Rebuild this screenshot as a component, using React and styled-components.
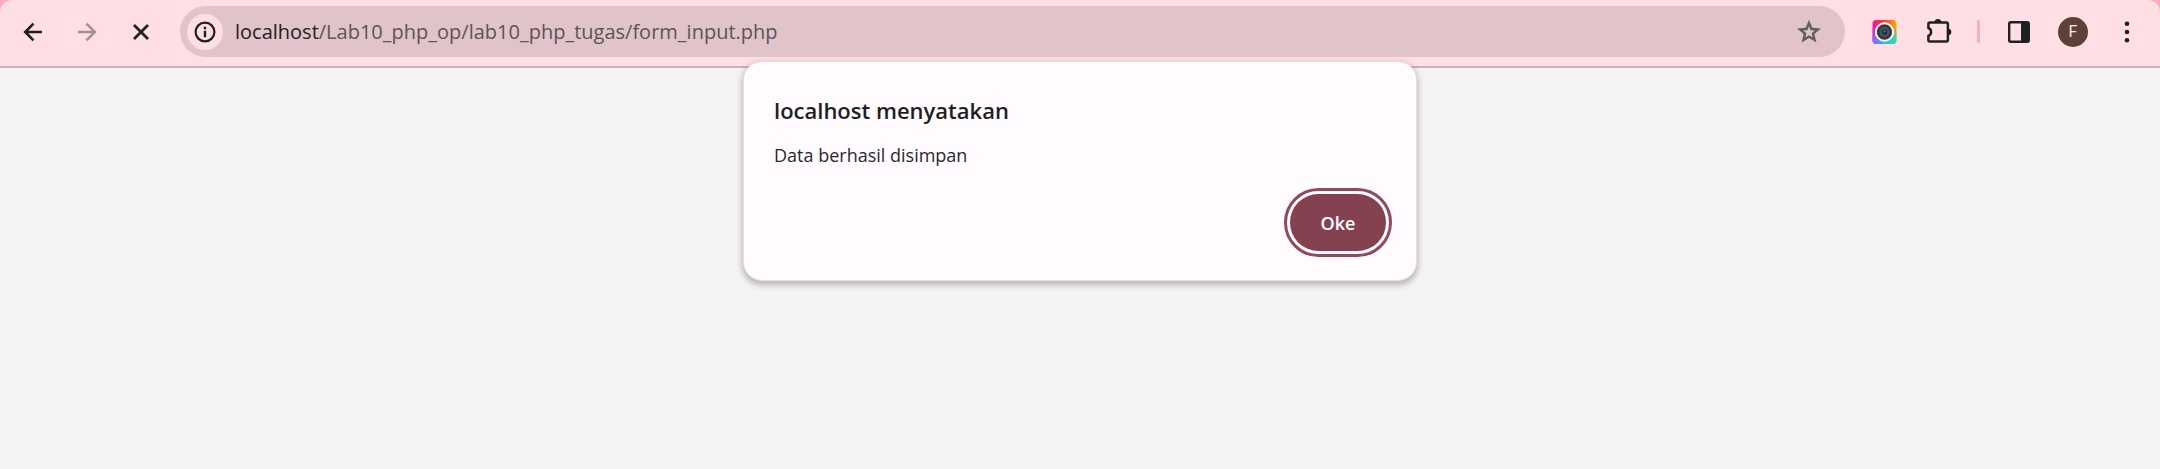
import React from "react";
import styled, { createGlobalStyle } from "styled-components";

const GlobalStyle = createGlobalStyle`
  * { box-sizing: border-box; }
  body {
    margin: 0;
    background: #f4f4f4;
    color: #1f1f1f;
    font-family: "Open Sans", "Noto Sans", sans-serif;
  }
  button, input { font-family: inherit; }
`;

const Browser = styled.div`
  display: flex;
  flex-direction: column;
  min-height: 100vh;
`;

const Frame = styled.div`
  background: #ffa9b8;
`;

const Toolbar = styled.header`
  display: flex;
  align-items: center;
  padding: 6px 6px 9px;
  background: #ffdee4;
  border-bottom: 2px solid #ccb0b6;
  border-radius: 12px 12px 0 0;
`;

const ToolButton = styled.button`
  display: flex;
  flex: none;
  align-items: center;
  justify-content: center;
  width: 54px;
  height: 51px;
  padding: 0;
  border: 0;
  background: none;
  color: #1f2023;
  opacity: ${(p) => (p.disabled ? 0.4 : 1)};
`;

const AddressBar = styled.div`
  display: flex;
  flex: 1;
  align-items: center;
  height: 51px;
  margin: 0 12px;
  padding: 0 9px 0 7px;
  border-radius: 26px;
  background: #e0c4c9;
`;

const InfoButton = styled.button`
  display: flex;
  flex: none;
  align-items: center;
  justify-content: center;
  width: 36px;
  height: 36px;
  padding: 0;
  border: 0;
  border-radius: 50%;
  background: #ffdee4;
  color: #1f2023;
`;

const Url = styled.a`
  flex: 1;
  margin-left: 12px;
  color: #5d5457;
  font-size: 20px;
  line-height: 30px;
  text-decoration: none;
  white-space: nowrap;
`;

const Host = styled.span`
  color: #1f2023;
`;

const Divider = styled.span`
  flex: none;
  width: 3px;
  height: 23px;
  margin: 0 12px;
  border-radius: 2px;
  background: #ffabba;
`;

const Avatar = styled.span`
  display: flex;
  align-items: center;
  justify-content: center;
  width: 30px;
  height: 30px;
  border-radius: 50%;
  background: #5d4037;
  color: #f1e9e6;
  font-family: Roboto, sans-serif;
  font-size: 16px;
  line-height: 20px;
`;

const Page = styled.main`
  position: relative;
  display: flex;
  flex: 1;
  justify-content: center;
`;

const Dialog = styled.section`
  position: absolute;
  top: -7px;
  width: 674px;
  padding: 32px 30px 29px;
  border: 1px solid #f0dce1;
  border-radius: 19px;
  background: #fffbff;
  box-shadow: 0 3px 6px 1px rgba(0, 0, 0, 0.26);
`;

const Title = styled.h1`
  margin: 0;
  font-size: 22px;
  font-weight: 600;
  line-height: 32px;
`;

const Message = styled.p`
  margin: 14px 0 0;
  color: #2b282b;
  font-size: 18px;
  line-height: 30px;
`;

const Actions = styled.div`
  display: flex;
  justify-content: flex-end;
  margin-top: 24px;
`;

const OkButton = styled.button`
  width: 96px;
  height: 57px;
  padding: 0;
  border: 0;
  border-radius: 29px;
  background: #844150;
  color: #ffffff;
  font-size: 18px;
  font-weight: 600;
  line-height: 28px;
  outline: 3px solid #904a5b;
  outline-offset: 3px;
`;

const BackIcon = () => (
  <svg width="20" height="20" viewBox="0 0 20 20" fill="none" stroke="currentColor" strokeWidth="2.6">
    <path d="M19 10H2.5M10.5 1.6 2.2 10l8.3 8.4" />
  </svg>
);

const ForwardIcon = () => (
  <svg width="20" height="20" viewBox="0 0 20 20" fill="none" stroke="currentColor" strokeWidth="2.6">
    <path d="M1 10h16.5M9.5 1.6 17.8 10l-8.3 8.4" />
  </svg>
);

const StopIcon = () => (
  <svg width="20" height="20" viewBox="0 0 20 20" fill="none" stroke="currentColor" strokeWidth="2.8">
    <path d="m3 3 14 14M17 3 3 17" />
  </svg>
);

const InfoIcon = () => (
  <svg width="22" height="22" viewBox="0 0 22 22">
    <circle cx="11" cy="11" r="9.4" fill="none" stroke="currentColor" strokeWidth="2.2" />
    <path d="M9.8 9.8h2.4v6.4H9.8zM9.8 5.8h2.4v2.4H9.8z" fill="currentColor" />
  </svg>
);

const StarIcon = () => (
  <svg width="26" height="26" viewBox="0 0 26 26" fill="#5f5f61" fillRule="evenodd">
    <path d="M13 .8l3.300 7.900 8.700.7-6.600 5.700 2 8.500L13 19.100l-7.400 4.500 2-8.500L1 9.400l8.700-.7zM13 7.300l-1.600 3.900-4.200.3 3.200 2.800-1 4.100 3.600-2.200 3.600 2.200-1-4.100 3.200-2.800-4.200-.3z" />
  </svg>
);

const CameraIcon = () => (
  <svg width="26" height="26" viewBox="0 0 26 26">
    <defs>
      <linearGradient id="cam-top" x1="0" x2="1" y1="0" y2="0">
        <stop offset="0" stopColor="#f410b0" />
        <stop offset=".45" stopColor="#fb3a25" />
        <stop offset="1" stopColor="#ffa508" />
      </linearGradient>
      <linearGradient id="cam-bottom" x1="0" x2="1" y1="0" y2="0">
        <stop offset="0" stopColor="#9c5bff" />
        <stop offset=".5" stopColor="#28b4ff" />
        <stop offset="1" stopColor="#28e2a6" />
      </linearGradient>
      <linearGradient id="cam-fade" x1="0" x2="0" y1="0" y2="1">
        <stop offset=".25" stopColor="#fff" stopOpacity="0" />
        <stop offset=".8" stopColor="#fff" />
      </linearGradient>
      <mask id="cam-mask">
        <rect width="26" height="26" fill="url(#cam-fade)" />
      </mask>
    </defs>
    <rect x="1.500" y="1" width="24" height="24" rx="4" fill="url(#cam-top)" />
    <rect x="1.500" y="1" width="24" height="24" rx="4" fill="url(#cam-bottom)" mask="url(#cam-mask)" />
    <circle cx="13.500" cy="13" r="9.700" fill="#fff" />
    <circle cx="13.500" cy="13" r="7.700" fill="#36383d" />
    <circle cx="13.500" cy="13" r="5" fill="#4c555e" />
    <circle cx="13.500" cy="13" r="2.800" fill="#17303f" />
    <circle cx="13.500" cy="12.500" r="1" fill="#4f87a3" />
  </svg>
);

const PuzzleIcon = () => (
  <svg width="28" height="28" viewBox="0 0 28 28">
    <path
      d="M5.900 4.500h16.500a1.500 1.500 0 0 1 1.500 1.500v16a1.500 1.500 0 0 1-1.500 1.500H5.900A1.500 1.500 0 0 1 4.400 22v-4.200c1.800-.7 2.700-2.100 2.700-3.900s-.9-3.200-2.700-3.900V6a1.500 1.500 0 0 1 1.500-1.500z"
      fill="none"
      stroke="currentColor"
      strokeWidth="2.500"
    />
    <path d="M10.400 4.500a3.500 3.500 0 0 1 7 0zM24 10.700a3.300 3.300 0 0 1 0 6.600z" fill="currentColor" />
  </svg>
);

const PanelIcon = () => (
  <svg width="24" height="24" viewBox="0 0 24 24">
    <rect x="2.200" y="2.200" width="19.600" height="19.600" rx="1.500" fill="none" stroke="currentColor" strokeWidth="2.400" />
    <path d="M14 2h7v20h-7z" fill="currentColor" />
  </svg>
);

const MenuIcon = () => (
  <svg width="24" height="24" viewBox="0 0 24 24" fill="currentColor">
    <circle cx="12" cy="3.700" r="2.300" />
    <circle cx="12" cy="12" r="2.300" />
    <circle cx="12" cy="20.300" r="2.300" />
  </svg>
);

export default function App() {
  return (
    <Browser>
      <GlobalStyle />
      <Frame>
        <Toolbar>
          <ToolButton type="button" aria-label="Kembali"><BackIcon /></ToolButton>
          <ToolButton type="button" aria-label="Maju" disabled><ForwardIcon /></ToolButton>
          <ToolButton type="button" aria-label="Berhenti"><StopIcon /></ToolButton>
          <AddressBar>
            <InfoButton type="button" aria-label="Info situs"><InfoIcon /></InfoButton>
            <Url href="/Lab10_php_op/lab10_php_tugas/form_input.php">
              <Host>localhost</Host>/Lab10_php_op/lab10_php_tugas/form_input.php
            </Url>
            <ToolButton type="button" aria-label="Bookmark"><StarIcon /></ToolButton>
          </AddressBar>
          <ToolButton type="button" aria-label="Kamera"><CameraIcon /></ToolButton>
          <ToolButton type="button" aria-label="Ekstensi"><PuzzleIcon /></ToolButton>
          <Divider />
          <ToolButton type="button" aria-label="Panel samping"><PanelIcon /></ToolButton>
          <ToolButton type="button"><Avatar>F</Avatar></ToolButton>
          <ToolButton type="button" aria-label="Menu"><MenuIcon /></ToolButton>
        </Toolbar>
      </Frame>
      <Page>
        <Dialog role="alertdialog" aria-labelledby="dialog-title" aria-describedby="dialog-message">
          <Title id="dialog-title">localhost menyatakan</Title>
          <Message id="dialog-message">Data berhasil disimpan</Message>
          <Actions>
            <OkButton type="button">Oke</OkButton>
          </Actions>
        </Dialog>
      </Page>
    </Browser>
  );
}
